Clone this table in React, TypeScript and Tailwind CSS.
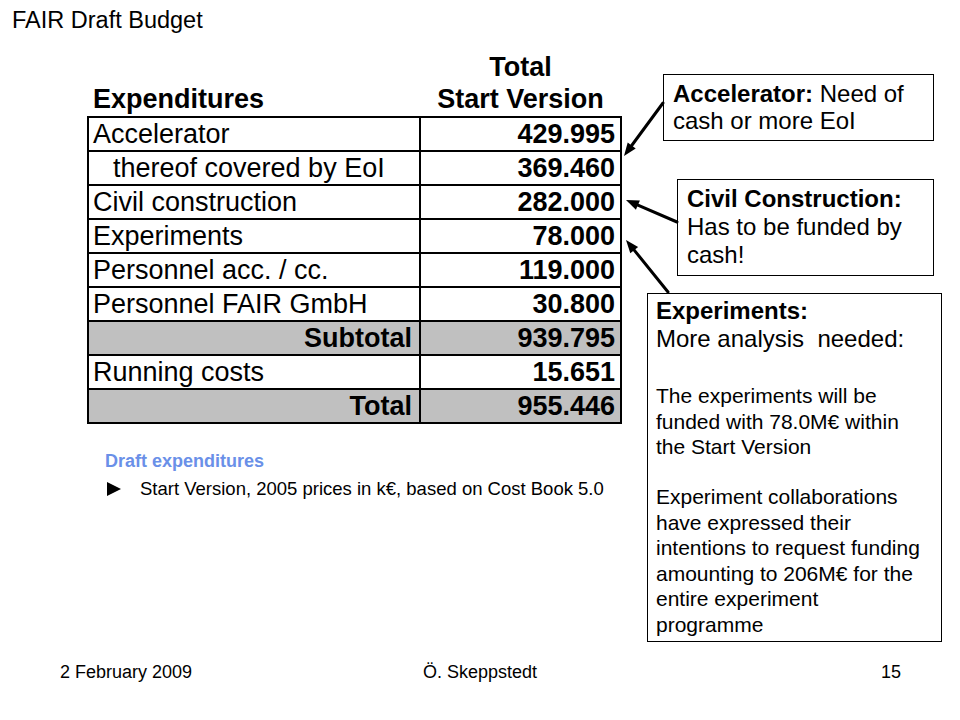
const rows = [
  { label: "Accelerator", value: "429.995" },
  { label: "thereof covered by EoI", value: "369.460", indent: true },
  { label: "Civil construction", value: "282.000" },
  { label: "Experiments", value: "78.000" },
  { label: "Personnel acc. / cc.", value: "119.000" },
  { label: "Personnel FAIR GmbH", value: "30.800" },
  { label: "Subtotal", value: "939.795", sum: true },
  { label: "Running costs", value: "15.651" },
  { label: "Total", value: "955.446", sum: true },
]

function Arrows() {
  return (
    <svg className="pointer-events-none absolute inset-0" width="960" height="720" viewBox="0 0 960 720">
      <g stroke="#000" strokeWidth="3" strokeLinecap="round">
        <line x1="663" y1="103" x2="631.7" y2="145.5" />
        <line x1="677" y1="222" x2="637.9" y2="205.1" />
        <line x1="668" y1="292" x2="634.2" y2="250.1" />
      </g>
      <g fill="#000">
        <polygon points="624,156 635.7,148.5 627.7,142.5" />
        <polygon points="626,200 639.9,200.5 635.9,209.7" />
        <polygon points="626,240 638.1,247 630.3,253.2" />
      </g>
    </svg>
  )
}

export default function App() {
  return (
    <div className="relative flex h-[720px] w-[960px] flex-col overflow-hidden bg-white font-['Liberation_Sans',Arial,sans-serif] text-black">
      <div className="pl-[12px] pt-[7px] text-[23.5px] leading-[26px]">FAIR Draft Budget</div>

      <div className="flex">
        {/* budget table */}
        <div className="ml-[87px] w-[535px]">
          <div className="mt-[18px] grid grid-cols-[332px_1fr] items-end text-[27px] font-bold leading-[32px]">
            <div className="pl-[6px]">Expenditures</div>
            <div className="text-center">
              Total
              <br />
              Start Version
            </div>
          </div>

          <div className="mt-[1px] border-2 border-black text-[27px] leading-[28px]">
            {rows.map((r, i) => {
              const last = i === rows.length - 1
              return (
                <div
                  key={r.label}
                  className={`grid grid-cols-[330px_1fr] overflow-hidden ${last ? "h-[32px]" : "h-[34px] border-b-2 border-black"} ${r.sum ? "bg-[#c0c0c0]" : ""}`}
                >
                  <div
                    className={`flex items-center ${r.sum ? "justify-end pr-[7px] font-bold" : r.indent ? "pl-[24px]" : "pl-[4px]"}`}
                  >
                    {r.label}
                  </div>
                  <div className="flex items-center justify-end border-l-2 border-black pr-[5px] font-bold">
                    {r.value}
                  </div>
                </div>
              )
            })}
          </div>

          <div className="ml-[18px] mt-[26px] text-[18px] font-bold leading-[22px] text-[#6a90e8]">
            Draft expenditures
          </div>
          <div className="ml-[20px] mt-[6px] flex items-center gap-[19px] text-[18.5px] leading-[22px]">
            <svg width="14" height="14" viewBox="0 0 14 14">
              <polygon points="0,0 14,7 0,14" fill="#000" />
            </svg>
            <span>Start Version, 2005 prices in k€, based on Cost Book 5.0</span>
          </div>
        </div>

        {/* callouts */}
        <div className="flex flex-col">
          <div className="ml-[41px] mt-[41px] h-[67px] w-[271px] border border-black pl-[9px] pt-[5px] text-[24px] leading-[27px]">
            <b>Accelerator:</b> Need of
            <br />
            cash or more EoI
          </div>
          <div className="ml-[55px] mt-[38px] h-[97px] w-[257px] border border-black pl-[9px] pt-[5px] text-[24px] leading-[28px]">
            <b>Civil Construction:</b>
            <br />
            Has to be funded by
            <br />
            cash!
          </div>
          <div className="ml-[25px] mt-[17px] h-[349px] w-[295px] whitespace-nowrap border border-black pl-[8px] pt-[3px]">
            <div className="text-[24px] leading-[28px]">
              <b>Experiments:</b>
              <br />
              {"More analysis\u00a0 needed:"}
            </div>
            <div className="mt-[30px] text-[21px] leading-[25.5px]">
              The experiments will be
              <br />
              funded with 78.0M€ within
              <br />
              the Start Version
            </div>
            <div className="mt-[24.5px] text-[21px] leading-[25.5px]">
              Experiment collaborations
              <br />
              have expressed their
              <br />
              intentions to request funding
              <br />
              amounting to 206M€ for the
              <br />
              entire experiment
              <br />
              programme
            </div>
          </div>
        </div>
      </div>

      <div className="mt-[19px] grid grid-cols-3 text-[18px] leading-[22px]">
        <div className="pl-[60px]">2 February 2009</div>
        <div className="text-center">Ö. Skeppstedt</div>
        <div className="pr-[59px] text-right">15</div>
      </div>

      <Arrows />
    </div>
  )
}
